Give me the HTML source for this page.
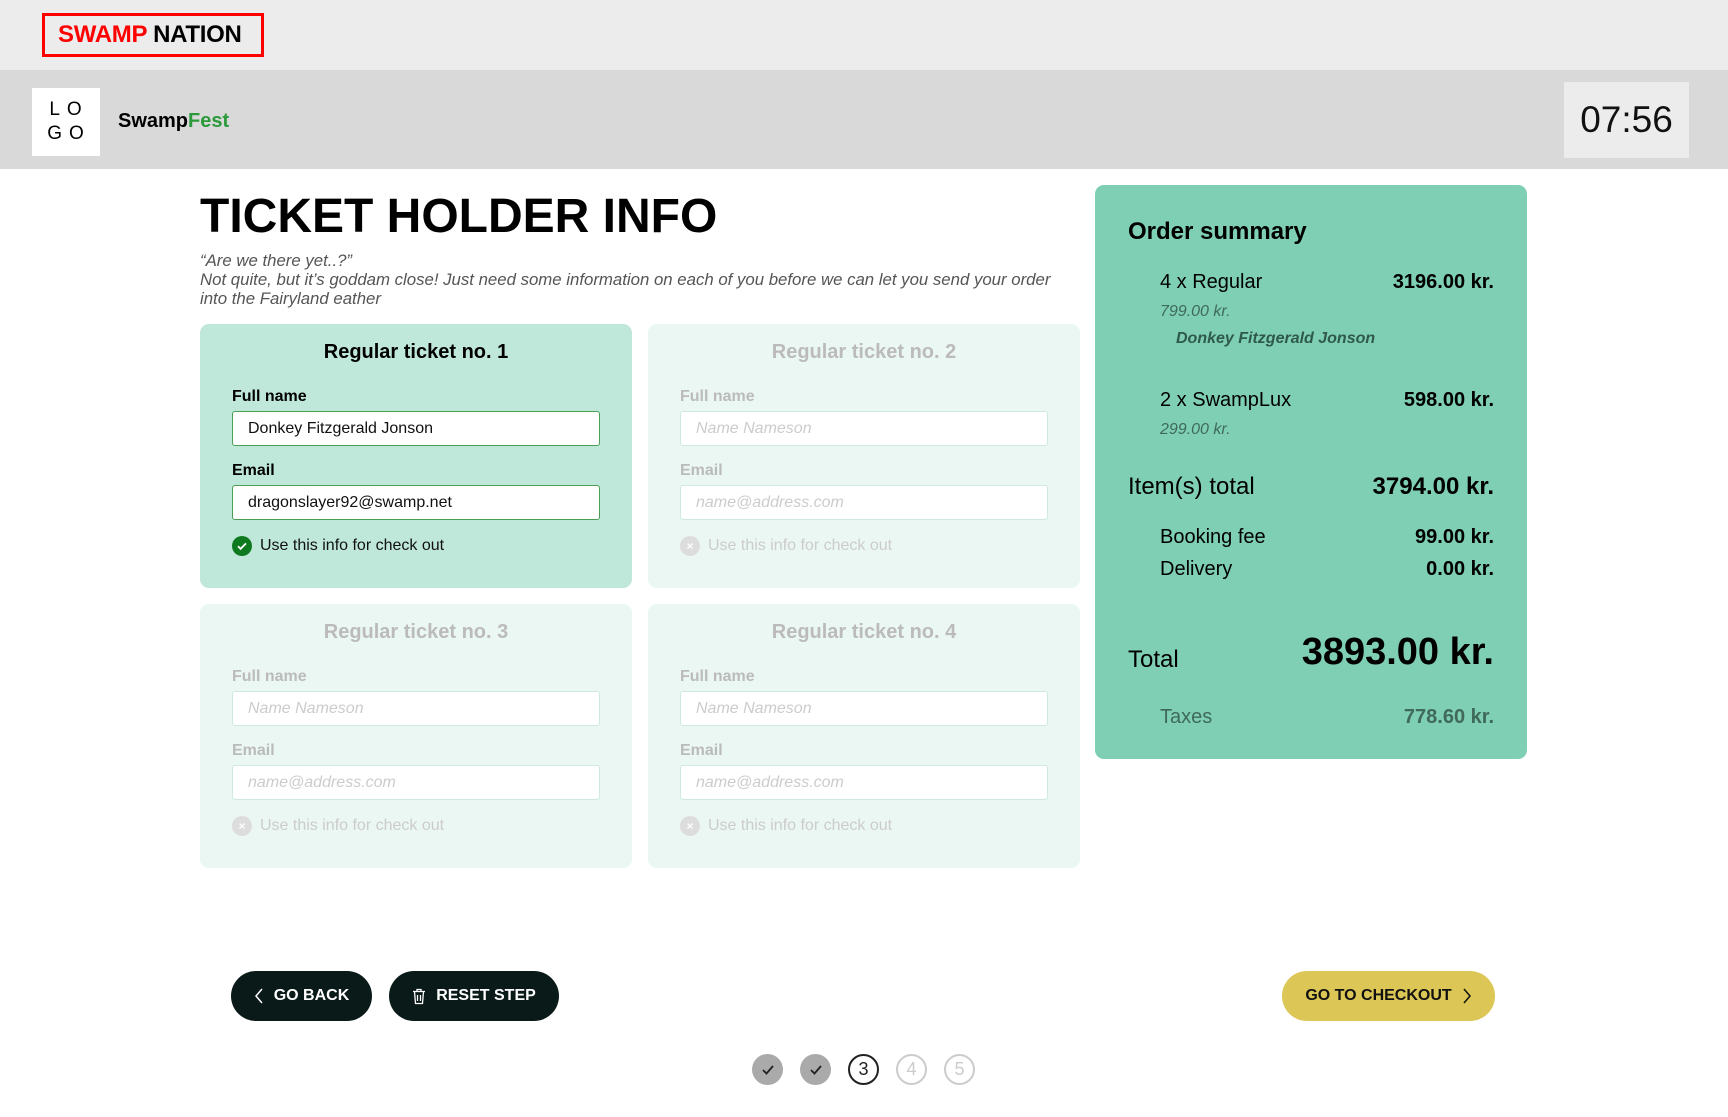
<!DOCTYPE html>
<html><head><meta charset="utf-8"><style>
*{box-sizing:border-box;margin:0;padding:0}
body{width:1728px;height:1117px;position:relative;background:#fff;font-family:"Liberation Sans",sans-serif;color:#000;overflow:hidden}
.a{position:absolute}
.top{left:0;top:0;width:1728px;height:70px;background:#ececec}
.brand{left:42px;top:13px;width:222px;height:44px;border:3px solid #f00;font-size:24px;font-weight:600;line-height:38px;padding-left:13px;letter-spacing:-0.3px}
.hdr{left:0;top:70px;width:1728px;height:99px;background:#d9d9d9}
.logo{left:32px;top:88px;width:68px;height:68px;background:#fff;font-size:19px;font-weight:500;letter-spacing:7px;text-align:center;line-height:24px;padding-top:10px;padding-left:6px}
.sf{left:118px;top:110px;font-size:20px;font-weight:600}
.clock{left:1564px;top:82px;width:125px;height:76px;background:#ececec;font-size:37px;text-align:center;line-height:76px;color:#111}
h1{position:absolute;left:200px;top:189px;font-size:48px;font-weight:700;letter-spacing:0px}
.intro{left:200px;top:251px;font-size:16.8px;font-style:italic;color:#555;line-height:19px}
.card{width:432px;height:264px;border-radius:9px;background:#ebf7f2}
.card.on{background:#bfe8db}
.ct{position:absolute;left:0;width:100%;top:17px;text-align:center;font-size:20px;font-weight:600;color:#bbb}
.on .ct{color:#000}
.lb{position:absolute;left:32px;font-size:16px;font-weight:600;color:#bbb}
.on .lb{color:#000}
.in{position:absolute;left:32px;width:368px;height:35px;background:#fff;border:1px solid #cfe9dc;border-radius:3px;font-size:16px;line-height:33px;padding-left:15px;color:#ccc;font-style:italic}
.on .in{border-color:#4a9e54;color:#111;font-style:normal}
.ck{position:absolute;left:32px;top:212px;font-size:16px;color:#ccc;display:flex;align-items:center;gap:8px}
.on .ck{color:#111}
.dot{width:20px;height:20px;border-radius:50%;background:#ddd;display:flex;align-items:center;justify-content:center}
.on .dot{background:#0e7a1f}
.side{left:1095px;top:185px;width:432px;height:574px;background:#7fcfb4;border-radius:9px}
.r{position:absolute;right:33px;font-weight:700;text-align:right}
.l{position:absolute}
.btn{height:50px;border-radius:25px;background:#0a1a18;color:#fff;font-size:16px;font-weight:600;display:flex;align-items:center;justify-content:center;gap:10px}
.st{width:31px;height:31px;border-radius:50%;top:1054px;display:flex;align-items:center;justify-content:center;font-size:18px}
</style></head><body>
<div class="a top"></div>
<div class="a brand"><span style="color:#f00">SWAMP</span> NATION</div>
<div class="a hdr"></div>
<div class="a logo">LO<br>GO</div>
<div class="a sf">Swamp<span style="color:#2a9a3a">Fest</span></div>
<div class="a clock">07:56</div>
<h1>TICKET HOLDER INFO</h1>
<div class="a intro">“Are we there yet..?”<br>Not quite, but it’s goddam close! Just need some information on each of you before we can let you send your order<br>into the Fairyland eather</div>

<div class="a card on" style="left:200px;top:324px"><div class="ct">Regular ticket no. 1</div><div class="lb" style="top:64px">Full name</div><div class="in" style="top:87px">Donkey Fitzgerald Jonson</div><div class="lb" style="top:138px">Email</div><div class="in" style="top:161px">dragonslayer92@swamp.net</div><div class="ck"><span class="dot"><svg width="12" height="12" viewBox="0 0 12 12"><path d="M2 6.2l2.6 2.6L10 3.4" stroke="#fff" stroke-width="1.8" fill="none"/></svg></span>Use this info for check out</div></div>
<div class="a card" style="left:648px;top:324px"><div class="ct">Regular ticket no. 2</div><div class="lb" style="top:64px">Full name</div><div class="in" style="top:87px">Name Nameson</div><div class="lb" style="top:138px">Email</div><div class="in" style="top:161px">name@address.com</div><div class="ck"><span class="dot"><svg width="10" height="10" viewBox="0 0 10 10"><path d="M2.5 2.5l5 5M7.5 2.5l-5 5" stroke="#fff" stroke-width="1.3"/></svg></span>Use this info for check out</div></div>
<div class="a card" style="left:200px;top:604px"><div class="ct">Regular ticket no. 3</div><div class="lb" style="top:64px">Full name</div><div class="in" style="top:87px">Name Nameson</div><div class="lb" style="top:138px">Email</div><div class="in" style="top:161px">name@address.com</div><div class="ck"><span class="dot"><svg width="10" height="10" viewBox="0 0 10 10"><path d="M2.5 2.5l5 5M7.5 2.5l-5 5" stroke="#fff" stroke-width="1.3"/></svg></span>Use this info for check out</div></div>
<div class="a card" style="left:648px;top:604px"><div class="ct">Regular ticket no. 4</div><div class="lb" style="top:64px">Full name</div><div class="in" style="top:87px">Name Nameson</div><div class="lb" style="top:138px">Email</div><div class="in" style="top:161px">name@address.com</div><div class="ck"><span class="dot"><svg width="10" height="10" viewBox="0 0 10 10"><path d="M2.5 2.5l5 5M7.5 2.5l-5 5" stroke="#fff" stroke-width="1.3"/></svg></span>Use this info for check out</div></div>

<div class="a side">
<div class="l" style="left:33px;top:33px;font-size:24px;font-weight:600">Order summary</div>
<div class="l" style="left:65px;top:86px;font-size:20px">4 x Regular</div><div class="r" style="top:86px;font-size:20px">3196.00 kr.</div>
<div class="l" style="left:65px;top:118px;font-size:16px;font-style:italic;color:#3f6a5a">799.00 kr.</div>
<div class="l" style="left:81px;top:145px;font-size:16px;font-style:italic;font-weight:700;color:#2f5a4a">Donkey Fitzgerald Jonson</div>
<div class="l" style="left:65px;top:204px;font-size:20px">2 x SwampLux</div><div class="r" style="top:204px;font-size:20px">598.00 kr.</div>
<div class="l" style="left:65px;top:236px;font-size:16px;font-style:italic;color:#3f6a5a">299.00 kr.</div>
<div class="l" style="left:33px;top:288px;font-size:24px">Item(s) total</div><div class="r" style="top:288px;font-size:24px">3794.00 kr.</div>
<div class="l" style="left:65px;top:341px;font-size:20px">Booking fee</div><div class="r" style="top:341px;font-size:20px">99.00 kr.</div>
<div class="l" style="left:65px;top:373px;font-size:20px">Delivery</div><div class="r" style="top:373px;font-size:20px">0.00 kr.</div>
<div class="l" style="left:33px;top:461px;font-size:24px">Total</div><div class="r" style="top:446px;font-size:38px">3893.00 kr.</div>
<div class="l" style="left:65px;top:521px;font-size:20px;color:#3f6a5a">Taxes</div><div class="r" style="top:521px;font-size:20px;color:#3f6a5a">778.60 kr.</div>
</div>

<div class="a btn" style="left:231px;top:971px;width:141px"><svg width="10" height="18" viewBox="0 0 10 18"><path d="M8 2L2 9l6 7" stroke="#fff" stroke-width="1.5" fill="none"/></svg>GO BACK</div>
<div class="a btn" style="left:389px;top:971px;width:170px"><svg width="14" height="17" viewBox="0 0 14 17"><path d="M1 3.5h12M5 3.5V1.5h4v2M2.5 3.5l1 12h7l1-12M5.5 7v6M8.5 7v6" stroke="#fff" stroke-width="1.3" fill="none"/></svg>RESET STEP</div>
<div class="a btn" style="left:1282px;top:971px;width:213px;background:#dcc655;color:#111">GO TO CHECKOUT<svg width="10" height="18" viewBox="0 0 10 18"><path d="M2 2l6 7-6 7" stroke="#111" stroke-width="1.5" fill="none"/></svg></div>

<div class="a st" style="left:752px;background:#aaa"><svg width="14" height="12" viewBox="0 0 14 12"><path d="M2 6l3.5 3.5L12 2" stroke="#222" stroke-width="1.8" fill="none"/></svg></div>
<div class="a st" style="left:800px;background:#aaa"><svg width="14" height="12" viewBox="0 0 14 12"><path d="M2 6l3.5 3.5L12 2" stroke="#222" stroke-width="1.8" fill="none"/></svg></div>
<div class="a st" style="left:848px;border:2px solid #222;color:#222">3</div>
<div class="a st" style="left:896px;border:2px solid #ccc;color:#ccc">4</div>
<div class="a st" style="left:944px;border:2px solid #ccc;color:#ccc">5</div>
</body></html>
